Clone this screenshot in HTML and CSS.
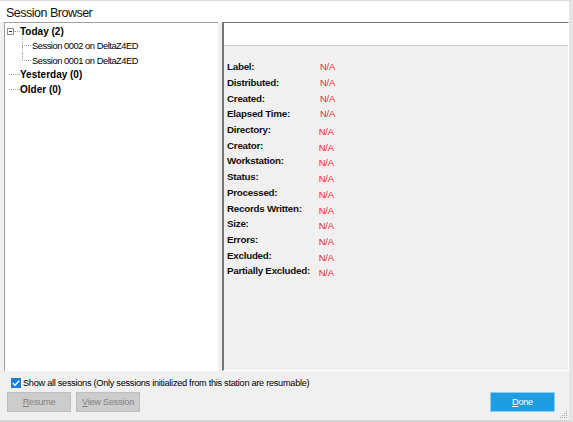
FILE: index.html
```html
<!DOCTYPE html>
<html>
<head>
<meta charset="utf-8">
<title>Session Browser</title>
<link rel="stylesheet" href="styles.css">
</head>
<body>
<div class="window">
  <div class="titlebar">Session Browser</div>
  <div class="client">
    <div class="panes">
      <div class="tree">
        <div class="row">
          <span class="expander"><span class="minus"></span></span>
          <span class="stub"></span>
          <span class="node bold">Today (2)</span>
        </div>
        <div class="row">
          <span class="branch first"><span class="up"></span><span class="down"></span></span>
          <span class="node">Session 0002 on DeltaZ4ED</span>
        </div>
        <div class="row">
          <span class="branch"><span class="up"></span></span>
          <span class="node">Session 0001 on DeltaZ4ED</span>
        </div>
        <div class="row">
          <span class="branch rootline"><span class="up"></span></span>
          <span class="node bold">Yesterday (0)</span>
        </div>
        <div class="row">
          <span class="branch rootline"><span class="up"></span></span>
          <span class="node bold">Older (0)</span>
        </div>
      </div>
      <div class="details">
        <div class="header"></div>
        <div class="props">
          <div class="prop"><span class="key">Label:</span><span class="val">N/A</span></div>
          <div class="prop"><span class="key">Distributed:</span><span class="val">N/A</span></div>
          <div class="prop"><span class="key">Created:</span><span class="val">N/A</span></div>
          <div class="prop"><span class="key">Elapsed Time:</span><span class="val">N/A</span></div>
          <div class="prop shift"><span class="key">Directory:</span><span class="val">N/A</span></div>
          <div class="prop shift"><span class="key">Creator:</span><span class="val">N/A</span></div>
          <div class="prop shift"><span class="key">Workstation:</span><span class="val">N/A</span></div>
          <div class="prop shift"><span class="key">Status:</span><span class="val">N/A</span></div>
          <div class="prop shift"><span class="key">Processed:</span><span class="val">N/A</span></div>
          <div class="prop shift"><span class="key">Records Written:</span><span class="val">N/A</span></div>
          <div class="prop shift"><span class="key">Size:</span><span class="val">N/A</span></div>
          <div class="prop shift"><span class="key">Errors:</span><span class="val">N/A</span></div>
          <div class="prop shift"><span class="key">Excluded:</span><span class="val">N/A</span></div>
          <div class="prop shift"><span class="key">Partially Excluded:</span><span class="val">N/A</span></div>
        </div>
      </div>
    </div>
    <div class="check">
      <span class="box"><svg width="10" height="10" viewBox="0 0 10 10"><rect x="0" y="0" width="10" height="10" fill="#1b7fd6"/><path d="M1.8 5.1 L4 7.3 L8.3 2.6" fill="none" stroke="#fff" stroke-width="1.4"/></svg></span>
      <span class="checktext">Show all sessions (Only sessions initialized from this station are resumable)</span>
    </div>
    <div class="buttons">
      <button class="btn" disabled><u>R</u>esume</button>
      <button class="btn" disabled><u>V</u>iew Session</button>
      <button class="btn primary"><u>D</u>one</button>
    </div>
  </div>
  <svg class="grip" width="10" height="10" viewBox="0 0 10 10">
    <g fill="#a8a8a8">
      <rect x="8" y="2" width="1" height="1"/>
      <rect x="6" y="4" width="1" height="1"/><rect x="8" y="4" width="1" height="1"/>
      <rect x="4" y="6" width="1" height="1"/><rect x="6" y="6" width="1" height="1"/><rect x="8" y="6" width="1" height="1"/>
      <rect x="2" y="8" width="1" height="1"/><rect x="4" y="8" width="1" height="1"/><rect x="6" y="8" width="1" height="1"/><rect x="8" y="8" width="1" height="1"/>
    </g>
  </svg>
</div>
</body>
</html>
```
FILE: styles.css
```css
html, body {
  margin: 0;
  padding: 0;
}
body {
  width: 573px;
  height: 422px;
  overflow: hidden;
  background: #f0f0f0;
  font-family: "Liberation Sans", Arial, sans-serif;
  color: #000;
}
.window {
  position: relative;
  box-sizing: border-box;
  width: 573px;
  height: 422px;
  border-top: 1px solid #d9d9d9;
  border-right: 4px solid #e4e4e4;
  border-bottom: 2px solid #d6d6d6;
  background: #f0f0f0;
  display: flex;
  flex-direction: column;
}
.titlebar {
  box-sizing: border-box;
  height: 21px;
  padding: 3px 0 0 6px;
  line-height: 18px;
  background: #fff;
  font-size: 12.5px;
  letter-spacing: -0.5px;
  color: #111;
}
.client {
  padding-left: 4px;
  display: flex;
  flex-direction: column;
}
.panes {
  display: flex;
  height: 349px;
}
.tree {
  box-sizing: border-box;
  width: 214px;
  background: #fff;
  border-left: 1px solid #a0a0a0;
  border-top: 1px solid #a0a0a0;
  padding-top: 1.5px;
}
.row {
  display: flex;
  height: 14.5px;
  line-height: 14.5px;
  font-size: 9.3px;
  letter-spacing: -0.45px;
  white-space: nowrap;
}
.node.bold {
  font-weight: bold;
  font-size: 10px;
  letter-spacing: 0;
}
.expander {
  box-sizing: border-box;
  width: 7px;
  height: 7px;
  margin: 3px 0 0 2px;
  border: 1px solid #919191;
  display: flex;
  align-items: center;
  justify-content: center;
  background: #fff;
}
.minus {
  width: 3px;
  height: 1px;
  background: #333;
}
.stub {
  box-sizing: border-box;
  width: 6px;
  height: 7px;
  border-bottom: 1px dotted #a0a0a0;
}
.branch {
  display: flex;
  flex-direction: column;
  width: 9px;
  margin: 0 1px 0 17px;
}
.branch .up {
  box-sizing: border-box;
  height: 7px;
  border-left: 1px dotted #a0a0a0;
  border-bottom: 1px dotted #a0a0a0;
}
.branch.first {
  margin-top: -2px;
}
.branch.first .up {
  height: 9px;
}
.branch .down {
  flex: 1;
  border-left: 1px dotted #a0a0a0;
}
.branch.rootline {
  width: 11px;
  margin: 0 0 0 4px;
}
.branch.rootline .up {
  border-left: none;
}
.details {
  box-sizing: border-box;
  width: 347px;
  margin-left: 4px;
  border-left: 2px solid #767676;
  border-top: 1px solid #767676;
  border-right: 1px solid #fff;
  border-bottom: 1px solid #fff;
  display: flex;
  flex-direction: column;
}
.header {
  height: 22px;
  background: #fff;
  border-bottom: 1px solid #cdcdcd;
}
.props {
  padding: 13px 0 0 3px;
}
.prop {
  display: flex;
  align-items: center;
  height: 15.7px;
  white-space: nowrap;
}
.key {
  width: 93px;
  font-weight: bold;
  font-size: 9.8px;
  letter-spacing: -0.25px;
  color: #111;
}
.val {
  color: #ee1f30;
  font-size: 9.4px;
  letter-spacing: -0.15px;
}
.prop.shift .key {
  width: 91.7px;
}
.prop.shift .val {
  padding-top: 4px;
}
.check {
  display: flex;
  align-items: center;
  height: 13px;
  margin-top: 5px;
  padding-left: 7px;
  font-size: 9.2px;
  letter-spacing: -0.28px;
  white-space: nowrap;
}
.box {
  display: flex;
  width: 10px;
  height: 10px;
  margin-right: 2px;
}
.buttons {
  display: flex;
  gap: 5px;
  margin-top: 3px;
  padding: 0 14px 0 3px;
}
.btn {
  box-sizing: border-box;
  width: 64px;
  height: 20px;
  padding: 0;
  font-family: inherit;
  font-size: 9.2px;
  letter-spacing: -0.25px;
}
.btn u {
  text-underline-offset: 1px;
}
.btn:disabled {
  background: #cccccc;
  border: 1px solid #bfbfbf;
  color: #838383;
}
.btn.primary {
  width: 65px;
  margin-left: auto;
  background: #1e9de3;
  border: 1px solid #8ccdf2;
  color: #fff;
}
.grip {
  position: absolute;
  right: 1px;
  bottom: 1px;
}
```
